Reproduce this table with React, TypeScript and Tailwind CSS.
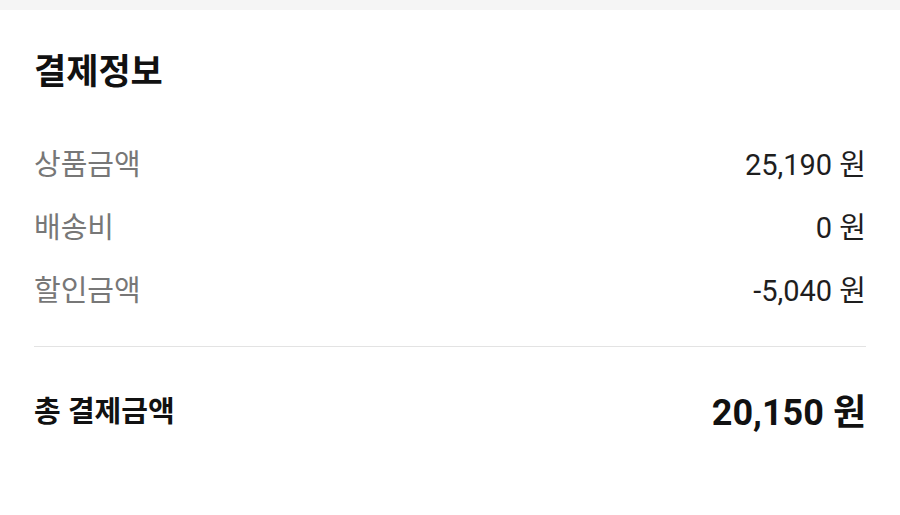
const rows = [
  { label: "상품금액", value: "25,190 원" },
  { label: "배송비", value: "0 원" },
  { label: "할인금액", value: "-5,040 원" },
];

export default function App() {
  return (
    <div
      className="min-h-screen bg-white"
      style={{ fontFamily: 'Roboto, "Noto Sans CJK KR", sans-serif' }}
    >
      <div className="h-[10px] bg-[#f5f5f5]"></div>

      <section className="px-[34px] pt-[43px]">
        <h2 className="text-[35px] font-bold leading-[40px] text-[#111111]">
          결제정보
        </h2>

        <div className="mt-[41px]">
          {rows.map((row) => (
            <div
              key={row.label}
              className="flex h-[63px] items-center justify-between"
            >
              <span className="text-[29px] text-[#777777]">{row.label}</span>
              <span className="text-[29px] text-[#1e1e1e]">{row.value}</span>
            </div>
          ))}
        </div>

        <div className="mt-[23px] border-t border-[#e3e3e3]"></div>

        <div className="mt-[34px] flex h-[63px] items-center justify-between">
          <span className="text-[29px] font-bold text-[#111111]">
            총 결제금액
          </span>
          <span className="text-[36px] font-bold text-[#111111]">
            20,150 원
          </span>
        </div>
      </section>
    </div>
  );
}
